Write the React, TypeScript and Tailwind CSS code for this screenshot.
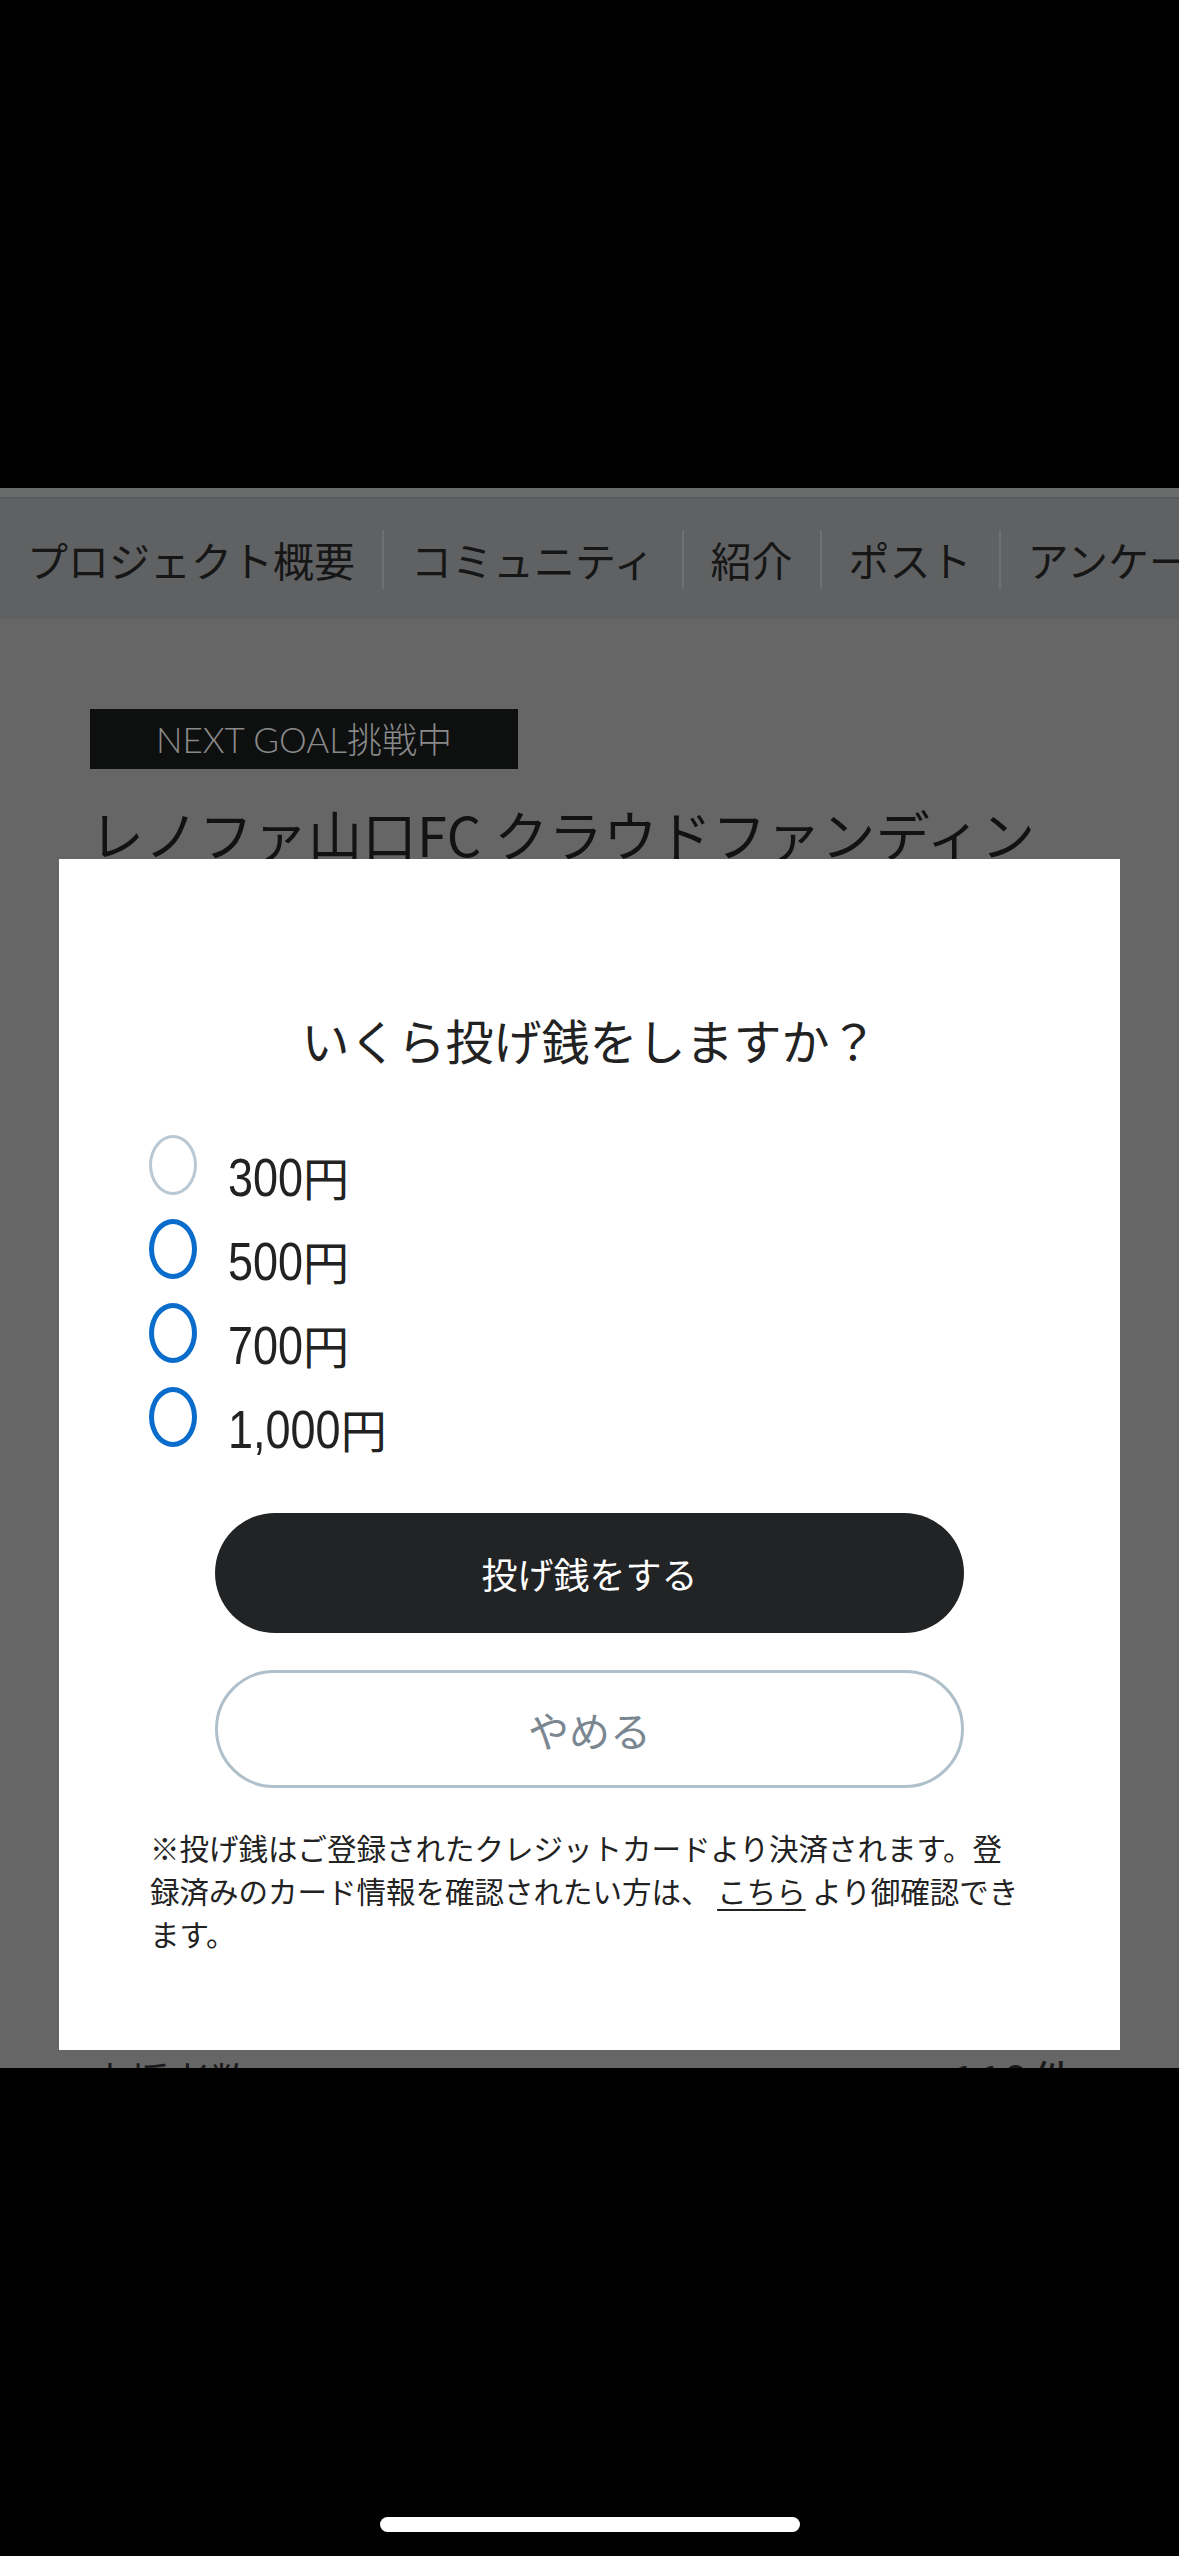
import React from "react";

const navItems = ["プロジェクト概要", "コミュニティ", "紹介", "ポスト", "アンケート"];

const amounts = [
  { n: "300", active: false },
  { n: "500", active: true },
  { n: "700", active: true },
  { n: "1,000", active: true },
];

export default function App() {
  return (
    <div className="w-[1179px] h-[2556px] bg-black flex flex-col overflow-hidden font-['Noto_Sans_CJK_JP',sans-serif]">
      <div className="h-[488px] shrink-0" />

      <div className="relative h-[1580px] shrink-0 overflow-hidden bg-[#666666] flex flex-col">
        <div className="h-[9px] shrink-0 bg-[#6a6b6b]" />
        <div className="h-[2px] shrink-0 bg-[#565b5d]" />
        <nav className="h-[120px] shrink-0 bg-[#5f6163] flex items-center whitespace-nowrap overflow-hidden">
          {navItems.map((t, i) => (
            <div key={t} className="flex items-center shrink-0">
              {i > 0 && <div className="w-[2px] h-[59px] bg-[#6b7073]" />}
              <span className="px-[27px] text-[41px] leading-none text-[#161616]">{t}</span>
            </div>
          ))}
        </nav>

        <div className="mt-[90px] ml-[90px] w-[428px] h-[60px] shrink-0 bg-[#0e1010] flex items-center justify-center text-[35px] leading-none text-[#8a8a8a] font-['Lato','Noto_Sans_CJK_JP',sans-serif] font-light">
          NEXT GOAL挑戦中
        </div>

        <h1 className="mt-[25px] ml-[90px] w-[980px] text-[54px] tracking-[0.5px] leading-[80px] text-[#121212] font-normal">
          レノファ山口FC クラウドファンディング2024
        </h1>

        <div className="flex-1" />

        <div className="h-[60px] shrink-0 -mb-[42px] flex justify-between items-center pl-[90px] pr-[101px] text-[#1a1a1a] leading-[60px]">
          <span className="text-[40px]">支援者数</span>
          <span className="text-[48px]">119件</span>
        </div>

        <div className="absolute left-[59px] top-[371px] w-[1061px] h-[1191px] bg-white flex flex-col">
          <h2 className="pt-[150px] text-center text-[48px] leading-[60px] text-[#222222] font-normal">
            いくら投げ銭をしますか？
          </h2>

          <div className="mt-[54px] flex flex-col">
            {amounts.map((a) => (
              <div key={a.n} className="h-[84px] flex items-center pl-[90px]">
                <span
                  className={
                    a.active
                      ? "w-[48px] h-[60px] rounded-[50%] border-[5px] border-[#0a6dcb] shrink-0"
                      : "w-[48px] h-[60px] rounded-[50%] border-[3px] border-[#b9c8d2] shrink-0"
                  }
                />
                <span className="ml-[31px] pt-[25px] flex items-baseline text-[#222222] whitespace-nowrap">
                  <span className="inline-block text-[45px] leading-none origin-[50%_85%] scale-y-[1.2] font-['Liberation_Sans',sans-serif]">
                    {a.n}
                  </span>
                  <span className="inline-block text-[46px] leading-none">円</span>
                </span>
              </div>
            ))}
          </div>

          <button className="mt-[54px] mx-auto w-[749px] h-[120px] shrink-0 rounded-full bg-[#222325] text-white text-[36px] leading-none flex items-center justify-center">
            投げ銭をする
          </button>

          <button className="mt-[37px] mx-auto w-[749px] h-[118px] shrink-0 rounded-full bg-white border-[3px] border-[#afc0cb] text-[#7b8790] text-[41px] leading-none flex items-center justify-center">
            やめる
          </button>

          <p className="mt-[38px] ml-[91px] w-[876px] text-[29.5px] leading-[43px] text-[#222222]">
            ※投げ銭はご登録されたクレジットカードより決済されます。登録済みのカード情報を確認されたい方は、{" "}
            <a className="underline underline-offset-[6px] decoration-[2px] text-[#222222]">こちら</a>{" "}
            より御確認できます。
          </p>
        </div>
      </div>

      <div className="flex-1 flex items-end justify-center pb-[24px]">
        <div className="w-[420px] h-[15px] rounded-full bg-white" />
      </div>
    </div>
  );
}
